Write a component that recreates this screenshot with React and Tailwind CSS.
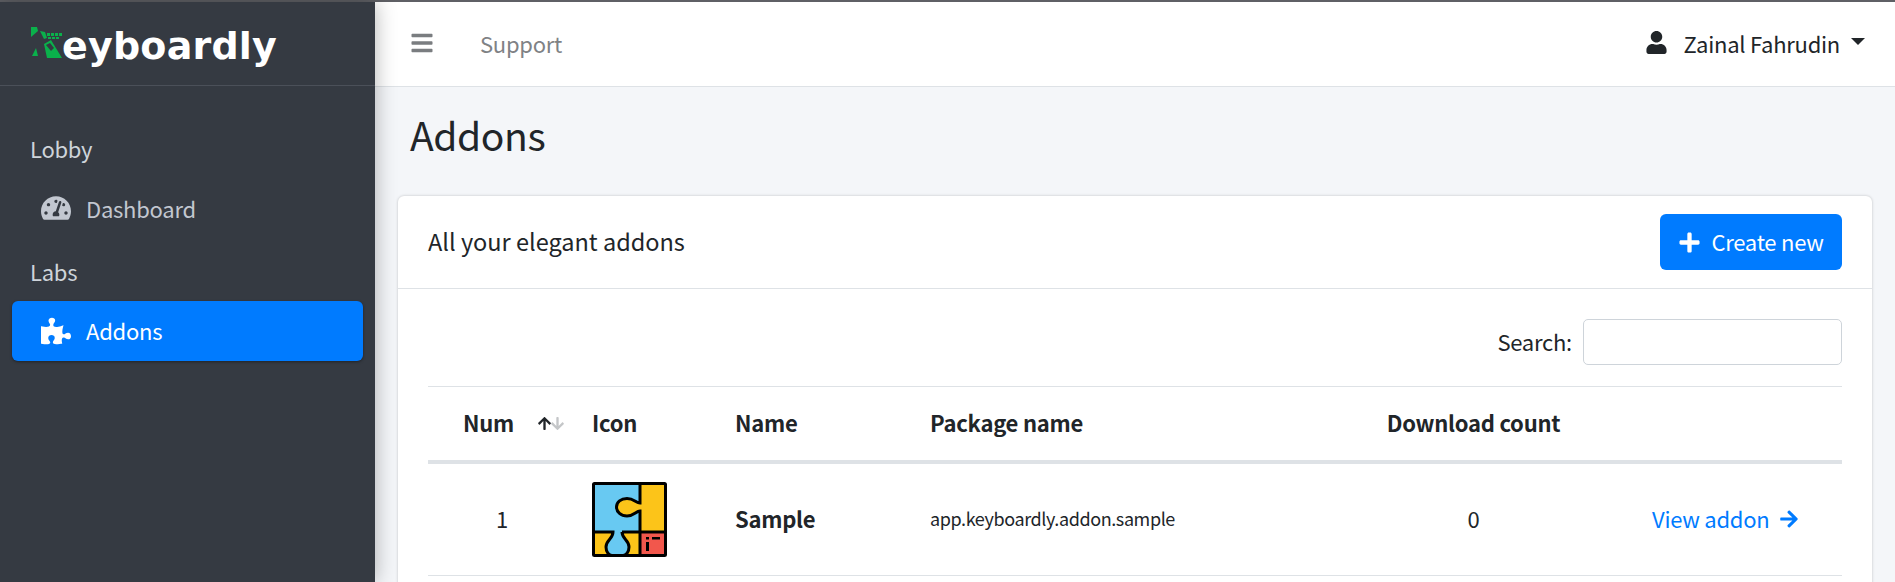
import { FaBars, FaUser, FaPlus, FaArrowRight, FaTachometerAlt, FaPuzzlePiece, FaArrowUp, FaArrowDown } from 'react-icons/fa'

function LogoMark() {
  return (
    <svg width="31" height="31" viewBox="0 0 31 31" className="shrink-0">
      <path d="M0 0h6l1 4-7 6z" fill="#0ab14b" />
      <path d="M9 4l5 1 2 6-3 1z" fill="#0ab14b" />
      <path d="M1 29l4-8 2 8z" fill="#0ab14b" />
      <path d="M13 17l7-4 11 18H16z" fill="#0ab14b" />
      <path d="M15 18l4-2 4 5-3 3z" fill="#353a42" />
      <g fill="#0ab14b">
        <rect x="16" y="6" width="3" height="3" />
        <rect x="20" y="6" width="3" height="3" />
        <rect x="24" y="6" width="3" height="3" />
        <rect x="28" y="6" width="3" height="3" />
        <rect x="17" y="10" width="3" height="2" />
        <rect x="21" y="10" width="3" height="2" />
        <rect x="25" y="10" width="3" height="2" />
      </g>
    </svg>
  )
}

function PuzzleIcon() {
  return (
    <svg width="75" height="75" viewBox="0 0 75 75" className="block">
      <rect x="1.5" y="1.5" width="72" height="72" fill="#68c9f2" />
      <path d="M48 1.500H73.500V50H48V29C44 29 42 34 35 34C29 34 24.500 30 24.500 25C24.500 20 29 16.500 35 16.500C42 16.500 44 21 48 21Z" fill="#fcc419" />
      <rect x="1.500" y="50" width="46.500" height="23.500" fill="#fcc419" />
      <path d="M21 50H30C30 57 37 58 37 65C37 70 34 73.500 31 73.500H20C17 73.500 14 70 14 65C14 58 21 57 21 50Z" fill="#68c9f2" />
      <rect x="48" y="50" width="25.500" height="23.500" fill="#f2574c" />
      <path d="M48 1.500V21C44 21 42 16.500 35 16.500C29 16.500 24.500 20 24.500 25C24.500 30 29 34 35 34C42 34 44 29 48 29V73.500M1.500 50H21C21 57 14 58 14 65C14 70 17 73.500 20 73.500M30 50C30 57 37 58 37 65C37 70 34 73.500 31 73.500M30 50H73.500" fill="none" stroke="#000" strokeWidth="3" />
      <rect x="1.500" y="1.500" width="72" height="72" rx="1" fill="none" stroke="#000" strokeWidth="3" />
      <path d="M54 55h3v2.500h-3zM60 55h8v2.500h-8zM54 60h3v9h-3z" fill="#000" />
    </svg>
  )
}

function SortIcons() {
  return (
    <span className="absolute left-[109px] top-[29px] flex">
      <FaArrowUp className="text-[15px] text-[#212529]" />
      <FaArrowDown className="ml-[-2px] text-[15px] text-[#c4c6c8]" />
    </span>
  )
}

function Sidebar() {
  return (
    <aside className="relative z-10 flex w-[375px] shrink-0 flex-col bg-[#353a42] shadow-[0_0_20px_rgba(0,0,0,0.3)]">
      <div className="flex h-[84px] items-center border-b border-[#4b5059] pb-[2px] pl-[31px]">
        <LogoMark />
        <span className="mt-[6px] font-['DejaVu_Sans',sans-serif] text-[38px] font-bold leading-none tracking-[0.2px] text-white">eyboardly</span>
      </div>
      <div className="px-[12px] text-[22px] leading-[30px] tracking-[-0.25px]">
        <p className="mt-[47px] pl-[18px] text-[#ced4da]">Lobby</p>
        <div className="mt-[30px] flex h-[30px] items-center pl-[29px] text-[#c2c7d0]">
          <FaTachometerAlt className="text-[30px]" />
          <span className="ml-[15px]">Dashboard</span>
        </div>
        <p className="mt-[33px] pl-[18px] text-[#ced4da]">Labs</p>
        <div className="mt-[15px] flex h-[60px] items-center rounded-[6px] bg-[#007bff] pl-[29px] text-white shadow-[0_1px_3px_rgba(0,0,0,0.4)]">
          <FaPuzzlePiece className="text-[30px]" />
          <span className="mb-[3px] ml-[15px]">Addons</span>
        </div>
      </div>
    </aside>
  )
}

function Header() {
  return (
    <header className="flex h-[85px] shrink-0 items-center border-b border-[#dee2e6] bg-white pb-[3px] pl-[35px] pr-[30px]">
      <FaBars className="text-[24px] text-[#7a7d80]" />
      <span className="ml-[46px] text-[#7f8285]">Support</span>
      <FaUser className="ml-auto text-[23px] text-[#212529]" />
      <span className="ml-[15px] text-[#212529]">Zainal Fahrudin</span>
      <span className="ml-[11px] mb-[2px] h-0 w-0 border-x-[7px] border-t-[7px] border-x-transparent border-t-[#212529]" />
    </header>
  )
}

function AddonsTable() {
  return (
    <table className="w-full table-fixed border-collapse text-[#212529]">
      <colgroup>
        <col className="w-[148px]" />
        <col className="w-[143px]" />
        <col className="w-[195px]" />
        <col className="w-[457px]" />
        <col className="w-[205px]" />
        <col />
      </colgroup>
      <thead>
        <tr className="h-[75px] border-t border-b-[4px] border-t-[#dee2e6] border-b-[#dee2e6]">
          <th className="relative pb-[2px] pl-[35px] text-left font-bold">Num<SortIcons /></th>
          <th className="pb-[2px] pl-[16px] text-left font-bold">Icon</th>
          <th className="pb-[2px] pl-[16px] text-left font-bold">Name</th>
          <th className="pb-[2px] pl-[16px] text-left font-bold">Package name</th>
          <th className="whitespace-nowrap pb-[2px] text-center font-bold">Download count</th>
          <th />
        </tr>
      </thead>
      <tbody>
        <tr className="h-[114px] border-b border-[#dee2e6]">
          <td className="pb-[2px] text-center">1</td>
          <td className="pl-[16px]"><PuzzleIcon /></td>
          <td className="pb-[2px] pl-[16px] font-bold">Sample</td>
          <td className="pb-[2px] pl-[16px] text-[18px] tracking-[-0.4px]">app.keyboardly.addon.sample</td>
          <td className="pb-[2px] text-center">0</td>
          <td className="pb-[2px] pl-[76px]">
            <span className="flex items-center text-[#007bff]">
              View addon
              <FaArrowRight className="ml-[9px] mt-[2px] text-[20px]" />
            </span>
          </td>
        </tr>
      </tbody>
    </table>
  )
}

export default function App() {
  return (
    <div className="flex h-[582px] flex-col overflow-hidden font-['Noto_Sans_CJK_SC','Noto_Sans',sans-serif] text-[22px] leading-[30px] tracking-[-0.25px]">
      <div className="h-[2px] shrink-0 bg-[#5f6065]" />
      <div className="flex min-h-0 flex-1">
        <Sidebar />
        <div className="flex min-w-0 flex-1 flex-col bg-[#f4f6f9]">
          <Header />
          <main className="px-[23px]">
            <h1 className="mt-[22px] pl-[12px] text-[39px] font-normal leading-[50px] tracking-[-0.4px] text-[#212529]">Addons</h1>
            <section className="mt-[37px] rounded-[6px] bg-white shadow-[0_0_3px_rgba(0,0,0,0.22)]">
              <div className="flex h-[93px] items-center justify-between border-b border-[#dee2e6] pl-[30px] pr-[30px]">
                <h2 className="mb-[2px] text-[23.5px] tracking-normal text-[#212529]">All your elegant addons</h2>
                <button className="flex h-[56px] w-[182px] items-center justify-center rounded-[6px] bg-[#007bff] text-white">
                  <FaPlus className="mr-[10px] text-[23px]" />
                  <span className="mb-[2px]">Create new</span>
                </button>
              </div>
              <div className="px-[30px] pb-[12px] pt-[30px]">
                <div className="mb-[21px] flex items-center justify-end text-[#212529]">
                  <label className="mb-[2px] mr-[11px]">Search:</label>
                  <input className="h-[46px] w-[259px] rounded-[5px] border border-[#ced4da] bg-white" />
                </div>
                <AddonsTable />
              </div>
            </section>
          </main>
        </div>
      </div>
    </div>
  )
}
